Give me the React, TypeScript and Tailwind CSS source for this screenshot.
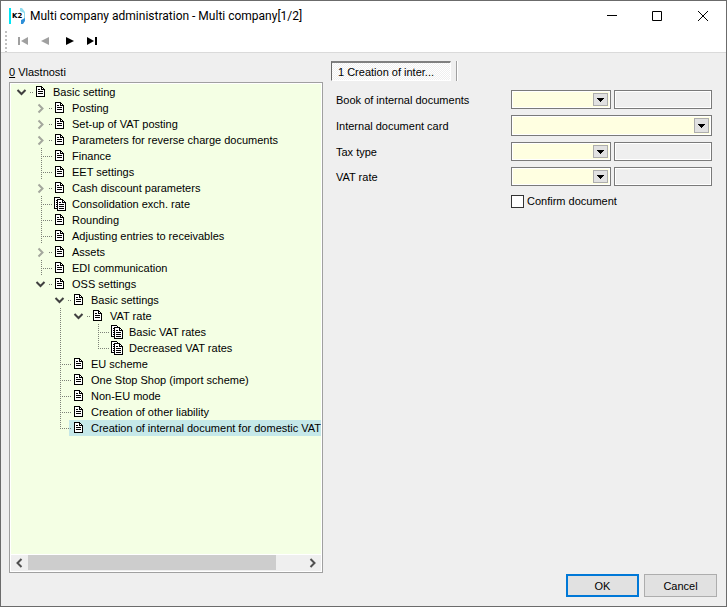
import type { ReactNode } from "react";

type TreeItem = {
  label: string;
  level: number;
  state?: "open" | "closed";
  multi?: boolean;
  // levels whose guide line runs through the row
  guides?: number[];
  last?: boolean;
  selected?: boolean;
};

const items: TreeItem[] = [
  { label: "Basic setting", level: 0, state: "open" },
  { label: "Posting", level: 1, state: "closed" },
  { label: "Set-up of VAT posting", level: 1, state: "closed" },
  { label: "Parameters for reverse charge documents", level: 1, state: "closed" },
  { label: "Finance", level: 1 },
  { label: "EET settings", level: 1 },
  { label: "Cash discount parameters", level: 1, state: "closed" },
  { label: "Consolidation exch. rate", level: 1, multi: true },
  { label: "Rounding", level: 1 },
  { label: "Adjusting entries to receivables", level: 1 },
  { label: "Assets", level: 1, state: "closed" },
  { label: "EDI communication", level: 1 },
  { label: "OSS settings", level: 1, state: "open" },
  { label: "Basic settings", level: 2, state: "open" },
  { label: "VAT rate", level: 3, state: "open", guides: [2] },
  { label: "Basic VAT rates", level: 4, multi: true, guides: [2] },
  { label: "Decreased VAT rates", level: 4, multi: true, guides: [2], last: true },
  { label: "EU scheme", level: 2 },
  { label: "One Stop Shop (import scheme)", level: 2 },
  { label: "Non-EU mode", level: 2 },
  { label: "Creation of other liability", level: 2 },
  {
    label: "Creation of internal document for domestic VAT",
    level: 2,
    last: true,
    selected: true,
  },
];

function Guide({ on }: { on: boolean }) {
  return (
    <svg width="19" height="16" className="shrink-0" aria-hidden="true">
      {on && <path d="M10.5 0v16" stroke="#7d8278" strokeDasharray="1 1" />}
    </svg>
  );
}

function Toggle({ item }: { item: TreeItem }) {
  return (
    <svg
      width="19"
      height="16"
      className="relative shrink-0 overflow-visible"
      fill="none"
      aria-hidden="true"
    >
      {item.state === "open" && (
        <path d="M5.5 6l4 4 4-4" stroke="#404040" strokeWidth="2" />
      )}
      {item.state === "closed" && (
        <path d="M7.5 4.5l4 4-4 4" stroke="#a3a79d" strokeWidth="2" />
      )}
      {item.state ? (
        <path d="M18 8.5h4" stroke="#7d8278" strokeDasharray="1 1" />
      ) : (
        <path
          d={item.last ? "M10.5 0v8M10 8.5h12" : "M10.5 0v16M12 8.5h10"}
          stroke="#7d8278"
          strokeDasharray="1 1"
        />
      )}
    </svg>
  );
}

function DocIcon({ multi }: { multi?: boolean }) {
  return (
    <svg
      width="19"
      height="16"
      viewBox="-3 0 19 16"
      className="shrink-0"
      fill="#fff"
      stroke="#000"
      shapeRendering="crispEdges"
      aria-hidden="true"
    >
      {multi ? (
        <>
          <path d="M1.5 1.5h5l2 2v9h-7z" />
          <path d="M3 4.5h2M3 6.5h2M3 8.5h2M3 10.5h2" />
          <path d="M4.5 3.5h5l3 3v8h-8z" />
          <path d="M9.5 3.5v3h3" fill="none" />
          <path d="M6 6.5h2M6 8.5h5M6 10.5h5M6 12.5h5" />
        </>
      ) : (
        <>
          <path d="M2.5 2.5h5l3 3v7h-8z" />
          <path d="M7.5 2.5v3h3" fill="none" />
          <path d="M4 5.5h2M4 7.5h5M4 9.5h5" />
        </>
      )}
    </svg>
  );
}

function TreeRow({ item }: { item: TreeItem }) {
  return (
    <li
      role="treeitem"
      aria-level={item.level + 1}
      aria-selected={Boolean(item.selected)}
      aria-expanded={item.state ? item.state === "open" : undefined}
      className="flex h-4"
    >
      {Array.from({ length: item.level }, (_, i) => (
        <Guide key={i} on={Boolean(item.guides?.includes(i))} />
      ))}
      <Toggle item={item} />
      <span className={item.selected ? "flex flex-1 bg-[#c5e8e8]" : "flex flex-1"}>
        <DocIcon multi={item.multi} />
        <span className="pl-[3px] whitespace-nowrap">{item.label}</span>
      </span>
    </li>
  );
}

function Combo({ id, tall }: { id: string; tall?: boolean }) {
  return (
    <div className={tall ? "relative h-[21px] flex-1" : "relative h-[19px] w-[100px] shrink-0"}>
      <select
        id={id}
        className="block h-full w-full appearance-none border border-[#7a7a7a] bg-[#ffffe1] outline-1 -outline-offset-2 outline-white"
      />
      <span className="pointer-events-none absolute inset-y-[3px] right-[3px] flex w-[15px] items-center justify-center border border-[#adadad] bg-[#e1e1e1]">
        <svg width="7" height="4" shapeRendering="crispEdges" aria-hidden="true">
          <path d="M0 0h7v1H0zM1 1h5v1H1zM2 2h3v1H2zM3 3h1v1H3z" />
        </svg>
      </span>
    </div>
  );
}

function Field({ id, label, wide }: { id: string; label: string; wide?: boolean }) {
  return (
    <div className="flex items-center">
      <label htmlFor={id} className="w-[175px] shrink-0">
        {label}
      </label>
      <div className="flex min-w-0 flex-1 gap-[3px]">
        <Combo id={id} tall={wide} />
        {!wide && (
          <input
            readOnly
            aria-label={`${label} description`}
            className="h-[19px] min-w-0 flex-1 border border-[#7a7a7a] bg-[#efefef] outline-1 -outline-offset-2 outline-white"
          />
        )}
      </div>
    </div>
  );
}

function NavButton({
  label,
  disabled,
  children,
}: {
  label: string;
  disabled?: boolean;
  children: ReactNode;
}) {
  return (
    <button
      type="button"
      aria-label={label}
      disabled={disabled}
      className="text-black disabled:text-[#a0a0a0]"
    >
      <svg width="23" height="22" fill="currentColor" aria-hidden="true">
        {children}
      </svg>
    </button>
  );
}

function WindowButton({ label, d }: { label: string; d: string }) {
  return (
    <button type="button" aria-label={label} className="flex w-[46px] items-center justify-center">
      <svg width="12" height="12" fill="none" stroke="#000" aria-hidden="true">
        <path d={d} />
      </svg>
    </button>
  );
}

function Logo() {
  return (
    <svg width="17" height="18" className="shrink-0" aria-hidden="true">
      <path d="M0 1h2v16H0z" fill="#00e5f5" />
      <path d="M11 1h2l3 4v7h-1V6l-4-2z" fill="#8fdcf0" />
      <path d="M12 13l4-2v3l-2 3h-2z" fill="#2d8fd8" />
      <text x="3" y="11" fontSize="7" fontWeight="900" fontFamily="DejaVu Sans">
        K2
      </text>
    </svg>
  );
}

export default function App() {
  return (
    <div className="flex min-h-screen flex-col border border-[#6b6b6b] bg-[#efefef] font-['Liberation_Sans',sans-serif] text-[11px] leading-4 text-black">
      <header className="border-b border-[#dadada] bg-white">
        <div className="flex h-[30px] items-stretch pl-2">
          <div className="flex flex-1 items-center gap-1">
            <Logo />
            <h1 className="font-[Roboto,sans-serif] text-[12px] whitespace-nowrap">
              Multi company administration - Multi company[1/2]
            </h1>
          </div>
          <WindowButton label="Minimize" d="M2 5.5h10" />
          <WindowButton label="Maximize" d="M1.5 1.5h9v9h-9z" />
          <WindowButton label="Close" d="M1 1l10 10M11 1L1 11" />
        </div>
        <div className="flex h-[21px] pl-1">
          <span className="mr-[5px] w-0.5 bg-[repeating-linear-gradient(#c0c0c0_0_2px,#fff_2px_4px)]" />
          <NavButton label="First" disabled>
            <path d="M6 6h2v8H6zM16 6v8l-7-4z" />
          </NavButton>
          <NavButton label="Previous" disabled>
            <path d="M14 6v8l-8-4z" />
          </NavButton>
          <NavButton label="Next">
            <path d="M8 6v8l8-4z" />
          </NavButton>
          <NavButton label="Last">
            <path d="M6 6v8l7-4zM14 6h2v8h-2z" />
          </NavButton>
        </div>
      </header>

      <main className="flex flex-1 gap-2 pt-2 pr-[14px] pl-2">
        <section className="flex w-[314px] shrink-0 flex-col">
          <h2 id="tree-title" className="mb-0.5 pt-[3px]">
            <u>0</u> Vlastnosti
          </h2>
          <div className="flex flex-1 flex-col border border-[#a0a0a0] bg-white p-px">
            <ul
              role="tree"
              aria-labelledby="tree-title"
              className="flex-1 overflow-hidden bg-[#f4ffe4] pl-px"
            >
              {items.map((item) => (
                <TreeRow key={item.label} item={item} />
              ))}
            </ul>
            <div className="mt-px flex h-4 bg-[#efefef]">
              <button type="button" aria-label="Scroll left" className="w-[17px]">
                <svg width="17" height="16" fill="none" aria-hidden="true">
                  <path d="M10.5 4l-4 4 4 4" stroke="#505050" strokeWidth="2" />
                </svg>
              </button>
              <div className="flex-1">
                <div className="h-[15px] w-[90%] bg-[#cdcdcd]" />
              </div>
              <button type="button" aria-label="Scroll right" className="w-[17px]">
                <svg width="17" height="16" fill="none" aria-hidden="true">
                  <path d="M6.5 4l4 4-4 4" stroke="#505050" strokeWidth="2" />
                </svg>
              </button>
            </div>
          </div>
        </section>

        <section className="min-w-0 flex-1">
          <div className="flex h-5 gap-[5px]">
            <button
              type="button"
              className="w-[120px] border border-t-2 border-r-white border-b-white border-t-[#808080] border-l-[#696969] bg-[repeating-conic-gradient(#fff_0_25%,#efefef_0_50%)] bg-size-[2px_2px] pl-[6px] text-left"
            >
              1 Creation of inter...
            </button>
            <span className="w-0.5 border-r border-l border-r-white border-l-[#a0a0a0]" />
          </div>
          <form className="mt-[9px] flex flex-col gap-[6px] pl-[5px]">
            <Field id="book" label="Book of internal documents" />
            <Field id="card" label="Internal document card" wide />
            <Field id="tax" label="Tax type" />
            <Field id="vat" label="VAT rate" />
            <label className="flex items-center gap-[3px] pt-px pl-[175px]">
              <input
                type="checkbox"
                className="size-[13px] appearance-none border border-[#333] bg-white"
              />
              Confirm document
            </label>
          </form>
        </section>
      </main>

      <footer className="flex justify-end gap-[5px] pt-px pr-[9px] pb-[9px]">
        <button type="button" className="h-[23px] w-[73px] border-2 border-[#0078d7] bg-[#e1e1e1]">
          OK
        </button>
        <button type="button" className="h-[23px] w-[73px] border border-[#adadad] bg-[#e1e1e1]">
          Cancel
        </button>
      </footer>
    </div>
  );
}
